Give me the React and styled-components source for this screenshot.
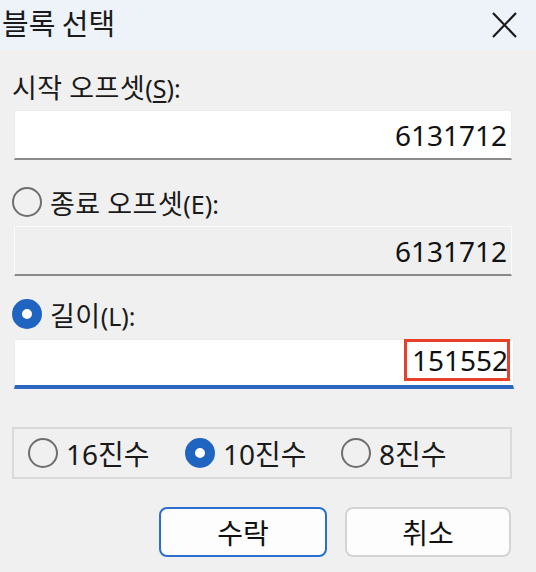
import styled, { createGlobalStyle } from 'styled-components'

const Global = createGlobalStyle`
  html, body { margin: 0; padding: 0; background: #f0f0f0; }
  body {
    font-family: "Noto Sans", "Noto Sans CJK KR", sans-serif;
    color: #1a1a1a;
  }
`

/* ── Window shell ────────────────────────────────────────── */
const Dialog = styled.div`
  width: 536px;
  height: 572px;
  background: #f0f0f0;
  display: flex;
  flex-direction: column;
  overflow: hidden;
`

const TitleBar = styled.div`
  height: 50px;
  background: #eef2f9;
  display: flex;
  align-items: center;
  justify-content: space-between;
  padding: 0 19px 0 2px;
  box-sizing: border-box;
`

const Title = styled.div`
  font-family: "Noto Sans CJK KR", sans-serif;
  font-size: 29px;
  line-height: 1;
  margin-top: -5px;
`

const Body = styled.div`
  display: flex;
  flex-direction: column;
  padding: 0 24px 0 14px;
`

/* ── Labels and fields ───────────────────────────────────── */
const Label = styled.div`
  display: flex;
  align-items: center;
  gap: 8px;
  height: 30px;
  margin: ${p => p.$top}px 0 ${p => p.$bottom}px -2px;
  font-family: "Noto Sans CJK KR", sans-serif;
  font-size: 27px;
  letter-spacing: 0.5px;
`

const Key = styled.span`
  font-family: "Noto Sans", sans-serif;
  font-size: 25px;
  letter-spacing: 0;
  u { text-underline-offset: 3px; }
`

const Field = styled.div`
  position: relative;
  height: 50px;
  box-sizing: border-box;
  background: ${p => (p.$disabled ? '#efefef' : '#ffffff')};
  border: 1px solid ${p => (p.$disabled ? '#fbfbfb' : '#ececec')};
  border-bottom: ${p => (p.$focused ? '4px solid #2e67c2' : '2px solid #8a8a8a')};
  border-radius: 2px 2px 0 0;
  display: flex;
  align-items: center;
  justify-content: flex-end;
  padding-right: ${p => (p.$focused ? 3 : 4)}px;
  font-family: "Noto Sans", sans-serif;
  font-size: 28px;
  color: #111;
  margin-right: ${p => (p.$focused ? -2 : 0)}px;
`

const Selected = styled.span`
  position: relative;
  display: inline-flex;
  align-items: center;
  height: 42px;
  margin-top: -6px;
  padding: 0 0 0 8px;
  outline: 3px solid #e8402a;
  outline-offset: -3px;
  box-sizing: border-box;
  &::after {
    content: '';
    width: 2px;
    height: 28px;
    background: #111;
  }
`

/* ── Radio ───────────────────────────────────────────────── */
const Radio = styled.span`
  width: 30px;
  height: 30px;
  flex: none;
  box-sizing: border-box;
  border-radius: 50%;
  border: ${p => (p.$checked ? '10px solid #1f64c0' : '2px solid #6e6e6e')};
  background: ${p => (p.$checked ? '#ffffff' : 'transparent')};
`

const Group = styled.div`
  margin: 38px 0 0 -2px;
  width: 500px;
  height: 52px;
  box-sizing: border-box;
  border: 2px solid #dadada;
  display: flex;
  align-items: center;
  padding-left: 14px;
`

const Choice = styled.div`
  display: flex;
  align-items: center;
  gap: 8px;
  width: ${p => p.$w}px;
  font-family: "Noto Sans", "Noto Sans CJK KR", sans-serif;
  font-size: 28px;
`

/* ── Buttons ─────────────────────────────────────────────── */
const Buttons = styled.div`
  display: flex;
  justify-content: flex-end;
  gap: 18px;
  margin: 28px 0 0 0;
  padding-right: 1px;
`

const Button = styled.button`
  width: ${p => (p.$primary ? 168 : 166)}px;
  height: 50px;
  box-sizing: border-box;
  background: #fdfdfd;
  border: 2px solid ${p => (p.$primary ? '#2a6fcc' : '#d4d4d4')};
  border-radius: 8px;
  font-family: "Noto Sans CJK KR", sans-serif;
  font-size: 28px;
  color: #111;
  padding: 0;
`

const Close = () => (
  <svg width="25" height="26" viewBox="0 0 25 26">
    <path d="M1 1 L24 25 M24 1 L1 25" stroke="#1a1a1a" strokeWidth="2.2" fill="none" />
  </svg>
)

export default function App() {
  return (
    <>
      <Global />
      <Dialog>
        <TitleBar>
          <Title>블록 선택</Title>
          <Close />
        </TitleBar>
        <Body>
          <Label $top={21} $bottom={9}>
            <span>시작 오프셋<Key>(<u>S</u>):</Key></span>
          </Label>
          <Field>6131712</Field>

          <Label $top={27} $bottom={9}>
            <Radio />
            <span>종료 오프셋<Key>(E):</Key></span>
          </Label>
          <Field $disabled>6131712</Field>

          <Label $top={23} $bottom={10}>
            <Radio $checked />
            <span>길이<Key>(L):</Key></span>
          </Label>
          <Field $focused>
            <Selected>151552</Selected>
          </Field>

          <Group>
            <Choice $w={157}><Radio />16진수</Choice>
            <Choice $w={156}><Radio $checked />10진수</Choice>
            <Choice $w={150}><Radio />8진수</Choice>
          </Group>

          <Buttons>
            <Button $primary>수락</Button>
            <Button>취소</Button>
          </Buttons>
        </Body>
      </Dialog>
    </>
  )
}
